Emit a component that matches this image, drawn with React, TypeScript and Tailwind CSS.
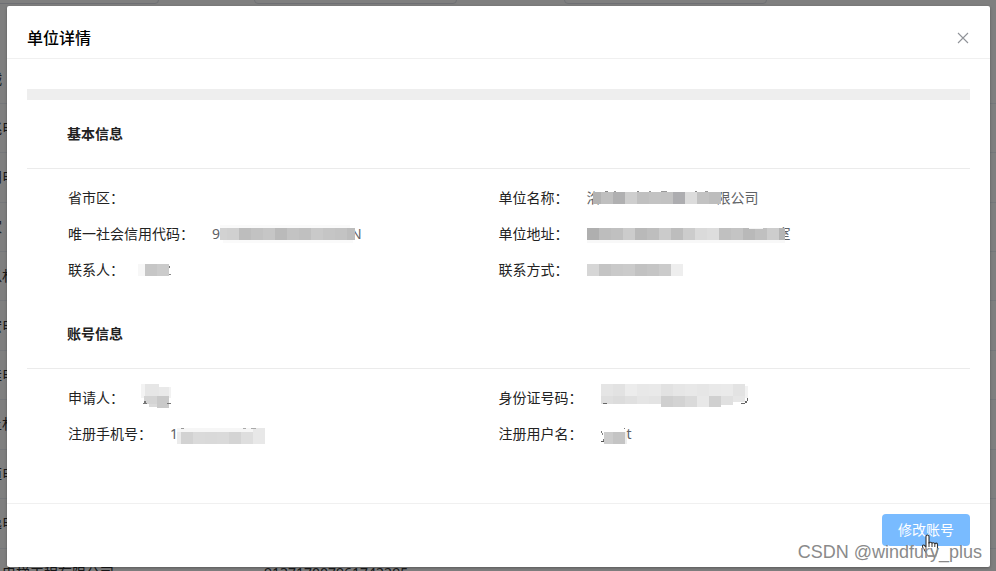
import type { ReactNode } from 'react'

// x, y, width, height, fill
type Cell = [number, number, number, number, string]

const CELL = 12

// One strip of equal mosaic cells
function strip(x: number, y: number, height: number, fills: string[]): Cell[] {
  return fills.map((fill, i) => [x + i * CELL, y, CELL, height, fill])
}

const NAME_CELLS: Cell[] = [
  [0, 6, 8, 12, '#b3b3b3'],
  ...strip(8, 6, 12, ['#bfbfbf', '#b0b0b1', '#cecece', '#c0c0c0', '#c3c3c3', '#c2c2c2', '#adadb0', '#dcdcdc', '#c2c2c2', '#bdbdbd']),
  [12, 5, 3, 1, '#888888'],
  [21, 5, 2, 1, '#999999'],
  [44, 5, 2, 1, '#888888'],
  [56, 5, 2, 1, '#999999'],
  [68, 5, 6, 1, '#999999'],
  [102, 5, 2, 1, '#888888'],
  [112, 5, 3, 1, '#999999'],
]

const ADDRESS_CELLS: Cell[] = [
  [0, 18, 198, 3, '#f8f8f8'],
  ...strip(0, 6, 12, ['#afafaf', '#bdbdbd', '#c0c0c0', '#cccccc', '#b9b9b9', '#bebebe', '#cbcbcb', '#bdbdbd', '#cccccc', '#dadada', '#dddddd', '#c0c0c0', '#c4c4c4', '#b9b9b9', '#c0c0c0', '#cdcdcd']),
  [192, 6, 6, 12, '#b5b5b5'],
  [162, 6, 14, 1, '#f4f4f4'],
]

const CONTACT_CELLS = strip(0, 6, 12, ['#d6d6d6', '#c4c4c4', '#c9c9c9', '#cbcbcb', '#c2c2c2', '#c5c5c5', '#cbcbcb', '#eeeeee'])

const CODE_CELLS: Cell[] = [
  [0, 3, 130, 3, '#fafafa'],
  [3, 18, 130, 3, '#fafafa'],
  [0, 6, 7, 12, '#d2d2d2'],
  ...strip(7, 6, 12, ['#d0d0d0', '#bdbdbd', '#c2c2c2', '#c6c6c6', '#bababa', '#c3c3c3', '#c0c0c0', '#c9c9c9', '#c5c5c5', '#c3c3c3']),
  [127, 6, 8, 12, '#bdbdbd'],
]

const PERSON_CELLS: Cell[] = [
  [0, 6, 7, 12, '#f7f7f7'],
  [7, 6, 12, 12, '#c6c6c6'],
  [19, 6, 12, 12, '#cbcbcb'],
  [31, 8, 1, 2, '#777777'],
  [31, 16, 2, 1, '#888888'],
]

const APPLICANT_CELLS: Cell[] = [
  [0, -2, 4, 14, '#f3f3f3'],
  [4, -2, 14, 12, '#e6e6e6'],
  [18, 1, 10, 9, '#e9e9e9'],
  [28, 1, 2, 11, '#f2f2f2'],
  [3, 10, 13, 8, '#d4d4d4'],
  [8, 18, 8, 3, '#dadada'],
  [16, 10, 12, 12, '#c9c9c9'],
  [2, 17, 4, 1, '#777777'],
  [3, 15, 2, 2, '#777777'],
  [26, 17, 4, 1, '#777777'],
]

const PHONE_CELLS: Cell[] = [
  [0, 6, 88, 4, '#f6f6f6'],
  [0, 10, 4, 12, '#ebebeb'],
  ...strip(4, 10, 12, ['#d2d2d2', '#dadada', '#d9d9d9', '#dadada', '#d4d4d4', '#dedede', '#dcdcdc']),
  [76, 6, 12, 16, '#e8e8e8'],
  [4, 6, 3, 1, '#999999'],
  [66, 6, 3, 1, '#aaaaaa'],
  [74, 6, 5, 1, '#aaaaaa'],
]

const ID_CELLS: Cell[] = [
  ...strip(0, -2, 12, ['#e5e5e5', '#e2e2e2', '#ececec', '#e8e8e8', '#e9e9e9', '#e2e2e2', '#e6e6e6', '#e8e8e8', '#e6e6e6', '#e9e9e9', '#eaeaea', '#e3e3e3']),
  ...strip(0, 10, 8, ['#dfdfdf', '#dcdcdc', '#e0e0e0', '#e5e5e5', '#e3e3e3']),
  ...strip(60, 10, 11, ['#cfcfcf', '#d3d3d3', '#dadada', '#e8e8e8', '#d0d0d0']),
  [120, 10, 12, 9, '#e0e0e0'],
  [132, 10, 12, 6, '#e6e6e6'],
  [144, 0, 3, 12, '#f2f2f2'],
  [2, 17, 4, 1, '#666666'],
  [140, 17, 4, 1, '#666666'],
  [144, 15, 2, 2, '#666666'],
  [146, 12, 1, 3, '#666666'],
]

const USER_CELLS: Cell[] = [
  [0, 9, 1, 2, '#777777'],
  [1, 11, 1, 2, '#888888'],
  [0, 19, 3, 1, '#555555'],
  [2, 17, 1, 2, '#777777'],
  [3, 10, 9, 12, '#cccccc'],
  [12, 10, 12, 12, '#c4c4c4'],
  [24, 10, 2, 12, '#ededed'],
  [23, 6, 1, 1, '#777777'],
]

function Mosaic({ width, cells, className = '' }: { width: number; cells: Cell[]; className?: string }) {
  return (
    <svg
      width={width}
      height={24}
      aria-hidden="true"
      shapeRendering="crispEdges"
      className={`relative z-10 shrink-0 overflow-visible ${className}`}
    >
      {cells.map(([x, y, w, h, fill], i) => (
        <rect key={i} x={x} y={y} width={w} height={h} fill={fill} />
      ))}
    </svg>
  )
}

function Field({ label, children }: { label: string; children?: ReactNode }) {
  return (
    <div className="flex h-5 items-center whitespace-nowrap">
      <dt className="text-[#222]">{label}：</dt>
      <dd className="ml-[18px] flex items-center text-[#606266]">{children}</dd>
    </div>
  )
}

function Section({ title, children }: { title: string; children: ReactNode }) {
  return (
    <section className="mb-5">
      <h3 className="border-b border-[#ebebeb] px-10 py-6 font-bold text-[#222]">{title}</h3>
      <dl className="mt-[19px] grid grid-cols-2 gap-y-4 px-[41px]">{children}</dl>
    </section>
  )
}

const ROWS = [
  { name: '诚', code: '' },
  { name: '兆电', code: '' },
  { name: '羽电', code: '' },
  { name: '家', code: '' },
  { name: '以林', code: '' },
  { name: '宏电', code: '' },
  { name: '佳电', code: '' },
  { name: '上林', code: '' },
  { name: '恒电', code: '' },
  { name: '逸电', code: '' },
  { name: '一电梯工程有限公司', code: '913717007961742295' },
]

const FILTER = 'h-8 w-[203px] shrink-0 rounded border border-[#dcdfe6] bg-white'

function ListPage() {
  return (
    <div className="h-full overflow-hidden bg-white">
      <form className="-mt-7 -ml-11 flex">
        <input className={FILTER} aria-label="单位名称" />
        <input className={`${FILTER} ml-[95px]`} aria-label="联系人" />
        <input className={`${FILTER} ml-[107px]`} aria-label="联系方式" />
      </form>
      <table className="mt-[51px] -ml-3 h-[543px] w-[calc(100%+12px)] table-fixed border-collapse whitespace-nowrap text-[#303133]">
        <tbody>
          {ROWS.map((row) => (
            <tr key={row.name} className="border-b border-[#ebeef5]">
              <td className="w-[276px]">{row.name}</td>
              <td>{row.code}</td>
            </tr>
          ))}
        </tbody>
      </table>
    </div>
  )
}

function HandCursor() {
  return (
    <svg width="18" height="24" viewBox="0 0 18 24" aria-hidden="true" className="absolute top-5 left-10">
      <path
        d="M5.5 1c-1 0-1.500.7-1.500 1.500v10.800l-1.300-1.600c-.7-.8-1.600-.8-2.100-.3-.4.500-.3 1.100.1 1.800l3.300 5.300c.7 1 1.500 1.700 1.500 3.500h8.500c0-1.800 1.500-3.200 1.500-6V10.500c0-1.700-2.300-1.800-2.700-.2 0-1.900-2.500-2-2.800-.6 0-1.700-2.700-1.800-3-.5V2.500C7 1.700 6.500 1 5.500 1z"
        fill="#fff"
        stroke="#333"
        strokeWidth="1.100"
        strokeLinejoin="round"
      />
      <path d="M7 8v5M10 10v3M12.800 10.500V13" fill="none" stroke="#333" strokeWidth="1" />
    </svg>
  )
}

export default function App() {
  return (
    <div className="relative h-screen overflow-hidden font-['Noto_Sans','Noto_Sans_CJK_SC',sans-serif] text-sm/5">
      <ListPage />

      <div className="absolute inset-0 bg-black/50 py-[6px] pr-[6px] pl-[7px]">
        <div role="dialog" aria-labelledby="dialog-title" className="rounded-xs bg-white shadow-[0_1px_3px_rgba(0,0,0,0.3)]">
          <header className="flex items-center justify-between border-b border-[#f0f0f0] px-5 pt-5 pb-2">
            <h2 id="dialog-title" className="text-base/6 font-medium text-black">单位详情</h2>
            <button type="button" aria-label="关闭" className="cursor-pointer text-[#909399]">
              <svg width="14" height="14" viewBox="0 0 14 14" fill="none" stroke="currentColor" strokeWidth="1.100">
                <path d="M2 2l10 10M12 2L2 12" />
              </svg>
            </button>
          </header>

          <div className="px-5 pt-[30px] pb-[39px]">
            <div className="h-[11px] bg-[#eee]" />

            <Section title="基本信息">
              <Field label="省市区" />
              <Field label="单位名称">
                洛
                <Mosaic width={128} cells={NAME_CELLS} className="-mr-1 -ml-2" />
                限公司
              </Field>
              <Field label="唯一社会信用代码">
                9
                <Mosaic width={135} cells={CODE_CELLS} className="-mr-1" />
                N
              </Field>
              <Field label="单位地址">
                <Mosaic width={198} cells={ADDRESS_CELLS} className="-mr-2" />
                室
              </Field>
              <Field label="联系人">
                <Mosaic width={32} cells={PERSON_CELLS} className="-ml-1" />
              </Field>
              <Field label="联系方式">
                <Mosaic width={96} cells={CONTACT_CELLS} />
              </Field>
            </Section>

            <Section title="账号信息">
              <Field label="申请人">
                <Mosaic width={30} cells={APPLICANT_CELLS} className="-ml-px" />
              </Field>
              <Field label="身份证号码">
                <Mosaic width={147} cells={ID_CELLS} />
              </Field>
              <Field label="注册手机号">
                1
                <Mosaic width={88} cells={PHONE_CELLS} className="-ml-px" />
              </Field>
              <Field label="注册用户名">
                <Mosaic width={26} cells={USER_CELLS} />
                t
              </Field>
            </Section>
          </div>

          <footer className="flex justify-end border-t border-[#f0f0f0] px-5 pt-[10px] pb-[21px]">
            <div className="relative">
              <button type="button" className="h-8 cursor-pointer rounded bg-[#79bbff] px-4 text-white">
                修改账号
              </button>
              <HandCursor />
            </div>
          </footer>
        </div>
      </div>

      <div className="absolute right-[14px] bottom-[7px] font-['Liberation_Sans',sans-serif] text-lg/6 text-[#8a8a8a] [text-shadow:1px_0_0_rgba(255,255,255,0.6)]">
        CSDN @windfury_plus
      </div>
    </div>
  )
}
